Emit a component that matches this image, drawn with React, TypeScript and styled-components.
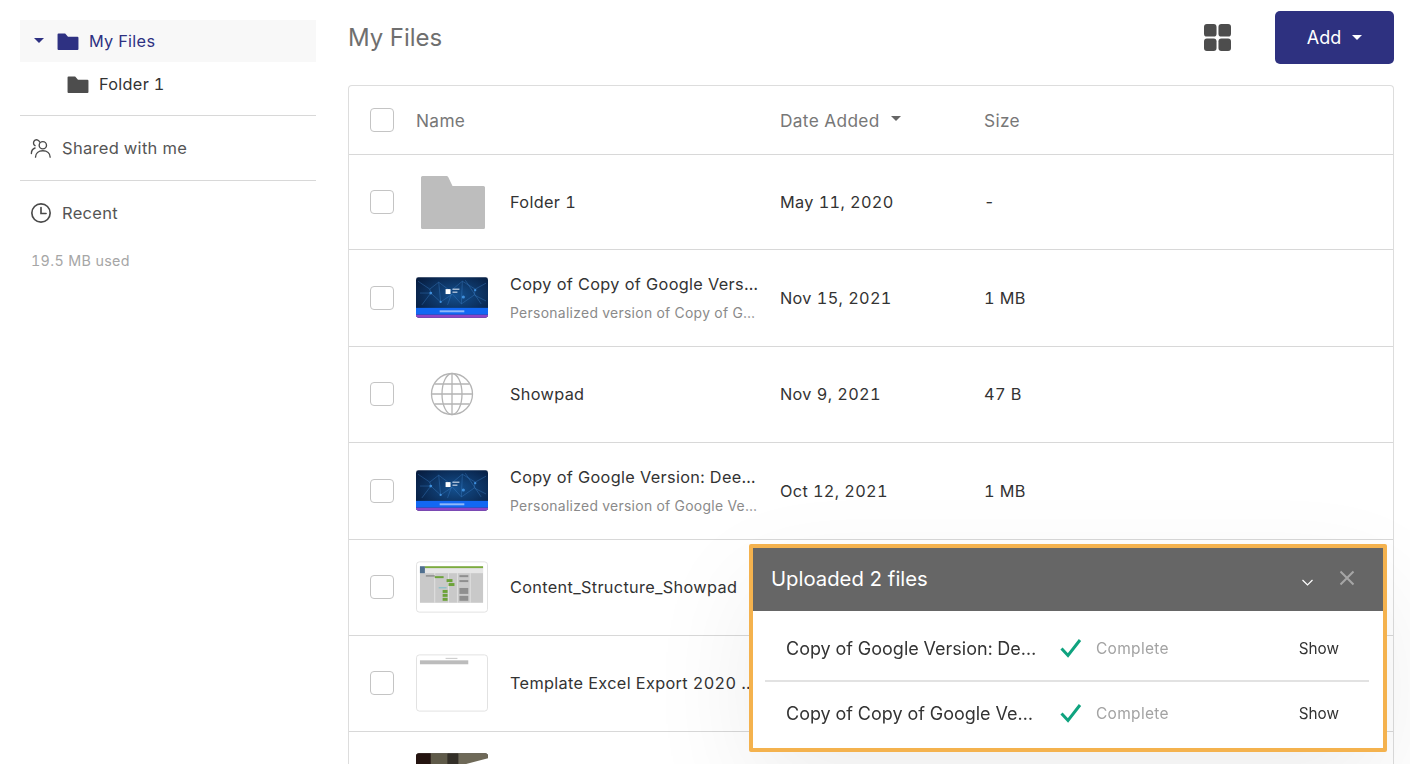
import React from 'react';
import styled, { createGlobalStyle } from 'styled-components';

const GlobalStyle = createGlobalStyle`
  html, body {
    margin: 0;
    height: 100%;
    overflow: hidden;
    background: #ffffff;
    font-family: Inter, "Liberation Sans", sans-serif;
    font-variant-numeric: tabular-nums;
    color: #2b2b2b;
  }
`;

const Page = styled.div`
  display: flex;
  height: 764px;
  overflow: hidden;
  padding: 0 16px 0 20px;
  gap: 32px;
`;

const Sidebar = styled.aside`
  width: 296px;
  flex: none;
  padding-top: 20px;
`;

const TreeRow = styled.div<{ $active?: boolean }>`
  display: flex;
  align-items: center;
  height: 42px;
  margin-bottom: 1px;
  padding-left: ${({ $active }) => ($active ? '14px' : '47px')};
  background: ${({ $active }) => ($active ? '#f8f8f8' : 'transparent')};
  color: ${({ $active }) => ($active ? '#2e3182' : '#333333')};
  font-size: 16.3px;
  letter-spacing: 0.3px;
`;

const Caret = styled.span<{ $color: string; $size?: number }>`
  display: inline-block;
  flex: none;
  border-left: ${({ $size = 5 }) => $size}px solid transparent;
  border-right: ${({ $size = 5 }) => $size}px solid transparent;
  border-top: ${({ $size = 5 }) => $size}px solid ${({ $color }) => $color};
`;

const TreeCaret = styled(Caret)`
  margin: -2px 13px 0 0;
`;

const TreeFolder = styled.svg`
  flex: none;
  width: 22px;
  height: 19px;
  margin-right: 10px;
`;

const Divider = styled.hr<{ $gap?: number }>`
  border: 0;
  border-top: 1px solid #d8d8d8;
  margin: ${({ $gap = 0 }) => $gap}px 0 0;
`;

const NavRow = styled.div`
  display: flex;
  align-items: center;
  height: 64px;
  padding-left: 10px;
  gap: 10px;
  color: #555555;
  font-size: 16.5px;
  letter-spacing: 0.3px;
`;

const NavIcon = styled.svg`
  flex: none;
  width: 22px;
  height: 22px;
  color: #4a4a4a;
`;

const Usage = styled.div`
  margin: 7px 0 0 11px;
  font-size: 14.3px;
  letter-spacing: 0.35px;
  color: #a6a6a6;
`;

const Main = styled.main`
  flex: 1;
  min-width: 0;
`;

const TopBar = styled.header`
  display: flex;
  align-items: center;
  height: 53px;
  margin-top: 11px;
  margin-bottom: 21px;
`;

const Title = styled.h1`
  flex: 1;
  margin: -1px 0 0;
  font-size: 24px;
  font-weight: 400;
  color: #6f6f6f;
`;

const GridIcon = styled.svg`
  width: 27px;
  height: 27px;
  margin-right: 44px;
`;

const AddButton = styled.button`
  display: flex;
  align-items: center;
  justify-content: center;
  gap: 11px;
  width: 119px;
  height: 53px;
  border: 0;
  border-radius: 5px;
  background: #2e3180;
  color: #ffffff;
  font: inherit;
  font-size: 18px;
`;

const Table = styled.section`
  border: 1px solid #dddddd;
  border-bottom: 0;
  border-radius: 4px 4px 0 0;
`;

const Row = styled.div<{ $height: number }>`
  display: flex;
  align-items: center;
  height: ${({ $height }) => $height}px;
  box-sizing: border-box;
  padding: 0 0 1px 21px;
  border-bottom: 1px solid #d8d8d8;
  font-size: 16.3px;
  letter-spacing: 0.33px;
  word-spacing: 0.2px;
`;

const Checkbox = styled.span`
  flex: none;
  width: 24px;
  height: 24px;
  box-sizing: border-box;
  border: 1.5px solid #c4c4c4;
  border-radius: 4px;
  background: #ffffff;
`;

const HeadCell = styled.div<{ $width: number }>`
  display: flex;
  align-items: center;
  gap: 11px;
  flex: none;
  width: ${({ $width }) => $width}px;
  padding-top: 2px;
  font-size: 17.3px;
  color: #777777;
`;

const HeadName = styled(HeadCell)`
  margin-left: 22px;
`;

const HeadCaret = styled(Caret)`
  margin-top: -5px;
`;

const ThumbSlot = styled.div`
  flex: none;
  display: flex;
  align-items: center;
  justify-content: center;
  width: 72px;
  margin: 0 22px;
`;

const ThumbPicture = styled.svg<{ $height: number }>`
  display: block;
  width: 73px;
  height: ${({ $height }) => $height}px;
`;

const FolderPicture = styled.svg`
  display: block;
  width: 64px;
  height: 53px;
  margin: 2px 0 0 2px;
`;

const NameCell = styled.div`
  flex: none;
  width: 250px;
  margin-right: 20px;
  display: flex;
  flex-direction: column;
  gap: 11px;
  min-width: 0;
`;

const FileName = styled.div`
  white-space: nowrap;
  overflow: hidden;
  text-overflow: ellipsis;
  color: #333333;
`;

const FileNote = styled.div`
  max-width: 247px;
  white-space: nowrap;
  overflow: hidden;
  text-overflow: ellipsis;
  font-size: 13.9px;
  letter-spacing: 0.3px;
  word-spacing: 0;
  color: #8a8a8a;
`;

const DateCell = styled.div`
  flex: none;
  width: 204px;
  color: #333333;
`;

const SizeCell = styled.div`
  color: #333333;
`;

const Panel = styled.aside`
  position: fixed;
  left: 749px;
  top: 544px;
  width: 638px;
  height: 208px;
  box-sizing: border-box;
  border: 4px solid #f4b24e;
  border-radius: 2px;
  background: #ffffff;
  box-shadow: 0 40px 110px rgba(0, 0, 0, 0.07);
`;

const PanelHead = styled.div`
  display: flex;
  align-items: center;
  height: 63px;
  padding: 0 28px 0 18px;
  background: #666666;
  color: #ffffff;
  font-size: 20.3px;
`;

const PanelTitle = styled.div`
  flex: 1;
  margin-top: -2px;
`;

const PanelChevron = styled.svg`
  width: 13px;
  height: 13px;
  margin: 5px 25px 0 0;
`;

const PanelClose = styled.svg`
  width: 16px;
  height: 16px;
  margin-top: -4px;
`;

const PanelRow = styled.div`
  display: flex;
  align-items: center;
  box-sizing: border-box;
  height: 69px;
  margin: 0 14px 0 12px;
  padding: 5px 30px 0 21px;
  font-size: 18px;
  color: #333333;
  & + & {
    border-top: 2px solid #e2e2e2;
    height: 68px;
    padding-top: 0;
    padding-bottom: 4px;
  }
`;

const PanelName = styled.div`
  flex: none;
  width: 251px;
  margin-right: 23px;
  white-space: nowrap;
  overflow: hidden;
  text-overflow: ellipsis;
`;

const CheckIcon = styled.svg`
  flex: none;
  width: 22px;
  height: 20px;
  margin-right: 14px;
`;

const PanelStatus = styled.div`
  flex: 1;
  font-size: 15.5px;
  letter-spacing: 0.3px;
  color: #a3a3a3;
`;

const ShowLink = styled.div`
  font-size: 15.3px;
  color: #333333;
`;

const FolderShape = ({ color }: { color: string }) => (
  <path d="M1 1.5h7l3 3.5h10a1 1 0 0 1 1 1v12a1 1 0 0 1-1 1H1a1 1 0 0 1-1-1V2.5a1 1 0 0 1 1-1z" fill={color} />
);

const DeckThumb = ({ id }: { id: string }) => (
  <ThumbPicture $height={41} viewBox="0 0 73 41">
    <defs>
      <radialGradient id={id} cx="0.55" cy="0.45" r="0.7">
        <stop offset="0" stopColor="#14508f" />
        <stop offset="1" stopColor="#06193a" />
      </radialGradient>
    </defs>
    <rect width="73" height="41" rx="2.5" fill={`url(#${id})`} />
    <path
      d="M2 4l12 8 9-7 12 9 12-10 13 8 11-6M6 28l9-12 10 9 12-8 9 10 13-9 12 6M14 12l1 4M23 5l2 20M47 4l-1 23M60 12l-1 6M4 16l11 0M36 17l-4 11M50 3l16 24"
      stroke="#3f86cf"
      strokeWidth="0.5"
      fill="none"
      opacity="0.75"
    />
    <circle cx="15" cy="16" r="1.4" fill="#3f8fdc" />
    <circle cx="48" cy="20" r="1.6" fill="#3f8fdc" />
    <circle cx="60" cy="13" r="1.2" fill="#3f8fdc" />
    <circle cx="25" cy="25" r="1.1" fill="#3f8fdc" />
    <rect x="30" y="12" width="5" height="5" fill="#ffffff" />
    <rect x="37" y="11.500" width="7" height="1.2" fill="#c8d6e8" />
    <rect x="37" y="14.500" width="5" height="1.2" fill="#c8d6e8" />
    <rect y="31" width="73" height="7" fill="#1268f3" />
    <rect x="24" y="33.5" width="25" height="2" fill="#8fb8fa" />
    <path d="M0 38h73v.5a2.500 2.500 0 0 1-2.500 2.500h-68A2.500 2.500 0 0 1 0 38.500z" fill="#8c45c8" />
  </ThumbPicture>
);

const SheetThumb = () => (
  <ThumbPicture $height={52} viewBox="0 0 73 52">
    <rect x="0.5" y="0.5" width="72" height="51" rx="3" fill="#ffffff" stroke="#e2e2e2" />
    <rect x="4" y="5" width="64" height="37" fill="#c9c9c9" />
    <rect x="9" y="5" width="59" height="2" fill="#7cad3c" />
    <rect x="4" y="7" width="64" height="5" fill="#e6e6e6" />
    <rect x="4" y="5" width="5" height="7" fill="#4f6f8f" />
    <path d="M19 12v30M33 12v30M42 12v30M55 12v30" stroke="#ececec" strokeWidth="0.7" />
    <rect x="10" y="14" width="9" height="1.5" fill="#8f8f8f" />
    <rect x="19" y="15" width="9" height="2" fill="#6da33a" />
    <rect x="31" y="18" width="6" height="3" fill="#6da33a" />
    <rect x="33" y="22" width="6" height="3" fill="#6da33a" />
    <rect x="23" y="26" width="8" height="1.500" fill="#8fc0c8" />
    <rect x="27" y="29" width="5" height="3" fill="#6da33a" />
    <rect x="27" y="33" width="5" height="3" fill="#6da33a" />
    <rect x="27" y="37" width="5" height="3" fill="#6da33a" />
    <rect x="44" y="14" width="9" height="2" fill="#8f8f8f" />
    <rect x="44" y="19" width="9" height="2" fill="#8f8f8f" />
    <rect x="44" y="27" width="9" height="6" fill="#8f8f8f" />
    <rect x="44" y="35" width="9" height="5" fill="#8f8f8f" />
  </ThumbPicture>
);

const BlankThumb = () => (
  <ThumbPicture $height={58} viewBox="0 0 73 58">
    <rect x="0.5" y="0.5" width="72" height="57" rx="3" fill="#ffffff" stroke="#e2e2e2" />
    <rect x="30" y="3.500" width="12" height="1.200" fill="#cfcfcf" />
    <rect x="4" y="6" width="49" height="4" fill="#bcbcbc" />
  </ThumbPicture>
);

const PhotoThumb = () => (
  <ThumbPicture $height={52} viewBox="0 0 73 52">
    <rect width="73" height="52" rx="3" fill="#3d3a33" />
    <path d="M3 0h12v52H0V3a3 3 0 0 1 3-3z" fill="#241410" />
    <rect x="15" width="17" height="52" fill="#5f5a49" />
    <rect x="32" width="11" height="52" fill="#332f28" />
    <path d="M43 0h27a3 3 0 0 1 3 3v49H43z" fill="#6e6958" />
    <path d="M50 11l23-6v8z" fill="#ffffff" />
  </ThumbPicture>
);

const FolderThumb = () => (
  <FolderPicture viewBox="0 0 64 53">
    <path d="M1.500 0h24a2 2 0 0 1 1.700 1l4.300 9h31a1.500 1.500 0 0 1 1.500 1.500v40a1.500 1.500 0 0 1-1.500 1.500h-61A1.500 1.500 0 0 1 0 51.500v-50A1.500 1.500 0 0 1 1.500 0z" fill="#bdbdbd" />
  </FolderPicture>
);

const GlobeThumb = () => (
  <ThumbPicture $height={44} viewBox="0 0 44 44">
    <g fill="none" stroke="#b4b4b4" strokeWidth="1.3">
      <circle cx="22" cy="22" r="20.500" />
      <ellipse cx="22" cy="22" rx="10" ry="20.500" />
      <path d="M22 1.500v41M1.500 22h41M4.500 12h35M4.500 32h35" />
    </g>
  </ThumbPicture>
);

const rows = [
  { h: 95, thumb: <FolderThumb />, name: 'Folder 1', date: 'May 11, 2020', size: '-' },
  { h: 97, thumb: <DeckThumb id="deck-a" />, name: 'Copy of Copy of Google Version: Deep Dive Deck', note: 'Personalized version of Copy of Google Version', date: 'Nov 15, 2021', size: '1 MB' },
  { h: 96, thumb: <GlobeThumb />, name: 'Showpad', date: 'Nov 9, 2021', size: '47 B' },
  { h: 97, thumb: <DeckThumb id="deck-b" />, name: 'Copy of Google Version: Deep Dive Deck', note: 'Personalized version of Google Version: Deep', date: 'Oct 12, 2021', size: '1 MB' },
  { h: 96, thumb: <SheetThumb />, name: 'Content_Structure_Showpad', date: '', size: '' },
  { h: 96, thumb: <BlankThumb />, name: 'Template Excel Export 2020 Final Version', date: '', size: '' },
  { h: 96, thumb: <PhotoThumb />, name: '', date: '', size: '' },
];

const uploads = ['Copy of Google Version: Deep Dive Deck', 'Copy of Copy of Google Version: Deep Dive'];

export default function App() {
  return (
    <>
      <GlobalStyle />
      <Page>
        <Sidebar>
          <TreeRow $active>
            <TreeCaret $color="#2e3182" />
            <TreeFolder viewBox="0 0 22 20"><FolderShape color="#2e3182" /></TreeFolder>
            My Files
          </TreeRow>
          <TreeRow>
            <TreeFolder viewBox="0 0 22 20"><FolderShape color="#4d4d4d" /></TreeFolder>
            Folder 1
          </TreeRow>
          <Divider $gap={10} />
          <NavRow>
            <NavIcon viewBox="0 0 24 24" fill="none" stroke="currentColor" strokeWidth="1.5" strokeLinecap="round">
              <circle cx="14" cy="9" r="4" />
              <path d="M6 22c0-4.500 3.500-7 8-7s8 2.500 8 7" />
              <path d="M10.500 5.500A3.500 3.500 0 0 0 5.500 3.500a3.500 3.500 0 0 0 0 6M1.500 18c0-3 1.500-5 4-6" />
            </NavIcon>
            Shared with me
          </NavRow>
          <Divider />
          <NavRow>
            <NavIcon viewBox="0 0 24 24" fill="none" stroke="currentColor" strokeWidth="1.8" strokeLinecap="round">
              <circle cx="12" cy="12" r="10" />
              <path d="M12 6v6.500h5.500" />
            </NavIcon>
            Recent
          </NavRow>
          <Usage>19.5 MB used</Usage>
        </Sidebar>
        <Main>
          <TopBar>
            <Title>My Files</Title>
            <GridIcon viewBox="0 0 28 28" fill="#4d4d4d">
              <rect width="13" height="13" rx="3" />
              <rect x="15" width="13" height="13" rx="3" />
              <rect y="15" width="13" height="13" rx="3" />
              <rect x="15" y="15" width="13" height="13" rx="3" />
            </GridIcon>
            <AddButton>
              Add
              <Caret $color="#ffffff" $size={5} />
            </AddButton>
          </TopBar>
          <Table>
            <Row $height={69}>
              <Checkbox />
              <HeadName $width={364}>Name</HeadName>
              <HeadCell $width={204}>
                Date Added
                <HeadCaret $color="#666666" />
              </HeadCell>
              <HeadCell $width={100}>Size</HeadCell>
            </Row>
            {rows.map((row, i) => (
              <Row key={i} $height={row.h}>
                <Checkbox />
                <ThumbSlot>{row.thumb}</ThumbSlot>
                <NameCell>
                  <FileName>{row.name}</FileName>
                  {row.note && <FileNote>{row.note}</FileNote>}
                </NameCell>
                <DateCell>{row.date}</DateCell>
                <SizeCell>{row.size}</SizeCell>
              </Row>
            ))}
          </Table>
        </Main>
      </Page>
      <Panel>
        <PanelHead>
          <PanelTitle>Uploaded 2 files</PanelTitle>
          <PanelChevron viewBox="0 0 13 13" fill="none" stroke="#ffffff" strokeWidth="1.2">
            <path d="M1.500 4l5 5 5-5" />
          </PanelChevron>
          <PanelClose viewBox="0 0 16 16" fill="none" stroke="#a6a6a6" strokeWidth="2">
            <path d="M1.500 1.500l13 13M14.500 1.500l-13 13" />
          </PanelClose>
        </PanelHead>
        {uploads.map((name) => (
          <PanelRow key={name}>
            <PanelName>{name}</PanelName>
            <CheckIcon viewBox="0 0 22 20" fill="none" stroke="#0fa37f" strokeWidth="3">
              <path d="M1.500 10.500l6.500 7L20 2" />
            </CheckIcon>
            <PanelStatus>Complete</PanelStatus>
            <ShowLink>Show</ShowLink>
          </PanelRow>
        ))}
      </Panel>
    </>
  );
}
